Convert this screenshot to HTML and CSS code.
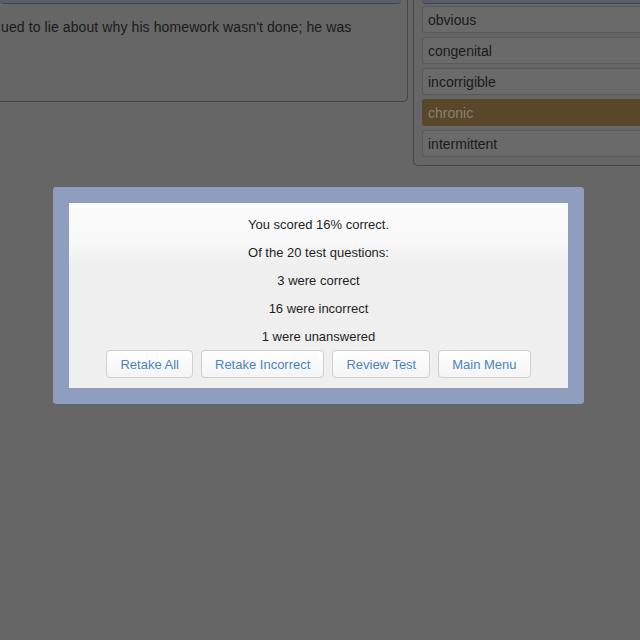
FILE: index.html
```html
<!DOCTYPE html>
<html>
<head>
  <link rel="stylesheet" href="styles.css">
</head>
<body>
  <div class="page">
    <div class="question-panel">
      <div class="panel-bar"></div>
      <div class="question-text">ued to lie about why his homework wasn't done; he was</div>
    </div>

    <div class="answer-panel">
      <div class="panel-bar"></div>
      <div class="answer-list">
        <div class="answer">obvious</div>
        <div class="answer">congenital</div>
        <div class="answer">incorrigible</div>
        <div class="answer selected">chronic</div>
        <div class="answer">intermittent</div>
      </div>
    </div>
  </div>

  <div class="modal">
    <div class="modal-body">
      <p class="result-line">You scored 16% correct.</p>
      <p class="result-line">Of the 20 test questions:</p>
      <p class="result-line">3 were correct</p>
      <p class="result-line">16 were incorrect</p>
      <p class="result-line">1 were unanswered</p>
      <div class="button-row">
        <button class="modal-button">Retake All</button>
        <button class="modal-button">Retake Incorrect</button>
        <button class="modal-button">Review Test</button>
        <button class="modal-button">Main Menu</button>
      </div>
    </div>
  </div>
</body>
</html>
```

FILE: styles.css
```css
body {
  font-family: "Liberation Sans", Arial, sans-serif;
  margin: 0;
  padding: 0;
  background-color: #666666;
  color: #1a1a1a;
  width: 640px;
  height: 640px;
  overflow: hidden;
  position: relative;
}

.page {
  display: flex;
  align-items: flex-start;
  gap: 5px;
}

.question-panel {
  width: 408px;
  height: 102px;
  box-sizing: border-box;
  border: 1px solid #464646;
  border-top: none;
  border-left: none;
  border-radius: 0 0 5px 0;
  flex-shrink: 0;
}

.answer-panel {
  width: 240px;
  height: 166px;
  box-sizing: border-box;
  border: 1px solid #464646;
  border-top: none;
  border-right: none;
  border-radius: 0 0 0 5px;
  flex-shrink: 0;
  padding: 0 0 0 8px;
}

.panel-bar {
  height: 3px;
  background-color: #595e6a;
  border-bottom: 1px solid #3f424a;
  border-radius: 0 0 4px 4px;
  margin-right: 6px;
}

.answer-panel .panel-bar {
  margin-right: 0;
}

.question-text {
  font-size: 14px;
  line-height: 18px;
  padding: 14px 0 0 1px;
  white-space: nowrap;
  letter-spacing: 0.1px;
}

.answer-list {
  display: flex;
  flex-direction: column;
  gap: 4px;
  margin-top: 2px;
}

.answer {
  height: 27px;
  box-sizing: border-box;
  border: 1px solid #5a5a5a;
  border-right: none;
  border-radius: 3px 0 0 3px;
  background-color: #6a6a6a;
  font-size: 14px;
  line-height: 23px;
  padding: 2px 0 0 5px;
}

.answer.selected {
  background-color: #594729;
  border-color: #594729;
  color: #8a8070;
}

.modal {
  position: absolute;
  left: 53px;
  top: 187px;
  width: 531px;
  box-sizing: border-box;
  padding: 16px;
  background-color: #8f9ebe;
  border-radius: 3px;
}

.modal-body {
  background: linear-gradient(#fbfbfb 0px, #f8f8f8 38px, #efefef 62px, #efefef);
  padding: 13px 0 10px;
  text-align: center;
  color: #1f1f1f;
}

.result-line {
  font-size: 13px;
  line-height: 18px;
  margin: 0 0 10px;
}

.result-line:last-of-type {
  margin-bottom: 4px;
}

.button-row {
  display: flex;
  justify-content: center;
  gap: 8px;
}

.modal-button {
  font-family: "Liberation Sans", Arial, sans-serif;
  font-size: 13px;
  color: #4a84c2;
  height: 28px;
  padding: 0 13px;
  border: 1px solid #cfcfcf;
  border-radius: 4px;
  background: linear-gradient(#ffffff, #f4f4f4);
  cursor: pointer;
}
```
